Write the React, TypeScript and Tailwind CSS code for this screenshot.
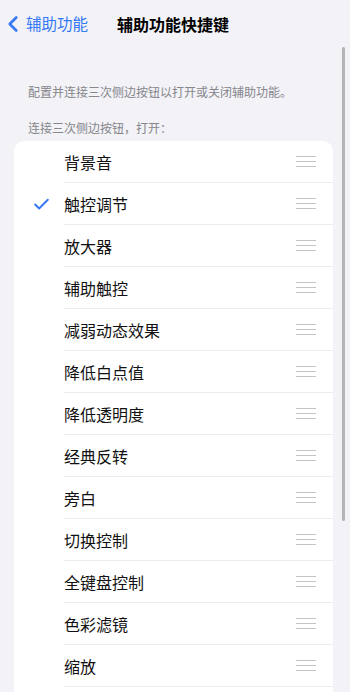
import { Check, ChevronLeft } from "lucide-react";

const items = [
  { label: "背景音", checked: false },
  { label: "触控调节", checked: true },
  { label: "放大器", checked: false },
  { label: "辅助触控", checked: false },
  { label: "减弱动态效果", checked: false },
  { label: "降低白点值", checked: false },
  { label: "降低透明度", checked: false },
  { label: "经典反转", checked: false },
  { label: "旁白", checked: false },
  { label: "切换控制", checked: false },
  { label: "全键盘控制", checked: false },
  { label: "色彩滤镜", checked: false },
  { label: "缩放", checked: false },
];

function DragHandle() {
  return (
    <div className="flex w-[20px] flex-col gap-[4px]">
      <div className="h-px bg-[#c4c4c8]" />
      <div className="h-px bg-[#c4c4c8]" />
      <div className="h-px bg-[#c4c4c8]" />
    </div>
  );
}

export default function App() {
  return (
    <div
      className="relative h-[692px] w-[350px] overflow-hidden bg-[#f2f2f7]"
      style={{ fontFamily: '"Noto Sans CJK SC", "Noto Sans", sans-serif' }}
    >
      <div className="flex h-[48px] items-center">
        <div className="flex items-center text-[#3478f6]">
          <ChevronLeft size={26} strokeWidth={2.4} />
          <span className="text-[15.5px] leading-none">辅助功能</span>
        </div>
        <div className="ml-[29px] text-[16px] font-bold leading-none text-black">辅助功能快捷键</div>
      </div>

      <div className="px-[28px] pt-[38px] text-[12px] leading-none text-[#86868b]">
        配置并连接三次侧边按钮以打开或关闭辅助功能。
      </div>
      <div className="px-[28px] pt-[24px] text-[12px] leading-none text-[#86868b]">
        连接三次侧边按钮，打开：
      </div>

      <div className="mx-[14px] mt-[7px] w-[319px] rounded-[10px] bg-white pb-[40px]">
        {items.map((item) => (
          <div key={item.label} className="flex h-[42px] items-center">
            <div className="flex w-[50px] justify-center pl-[4px]">
              {item.checked && <Check size={19} strokeWidth={2.4} className="text-[#3478f6]" />}
            </div>
            <div className="flex h-full flex-1 items-center border-b border-[#ececef] pr-[17px]">
              <span className="flex-1 text-[16px] leading-none text-[#111]">{item.label}</span>
              <DragHandle />
            </div>
          </div>
        ))}
      </div>

      <div className="absolute left-[342px] top-[47px] h-[474px] w-[3px] rounded-full bg-[#b5b5b8]" />
    </div>
  );
}
